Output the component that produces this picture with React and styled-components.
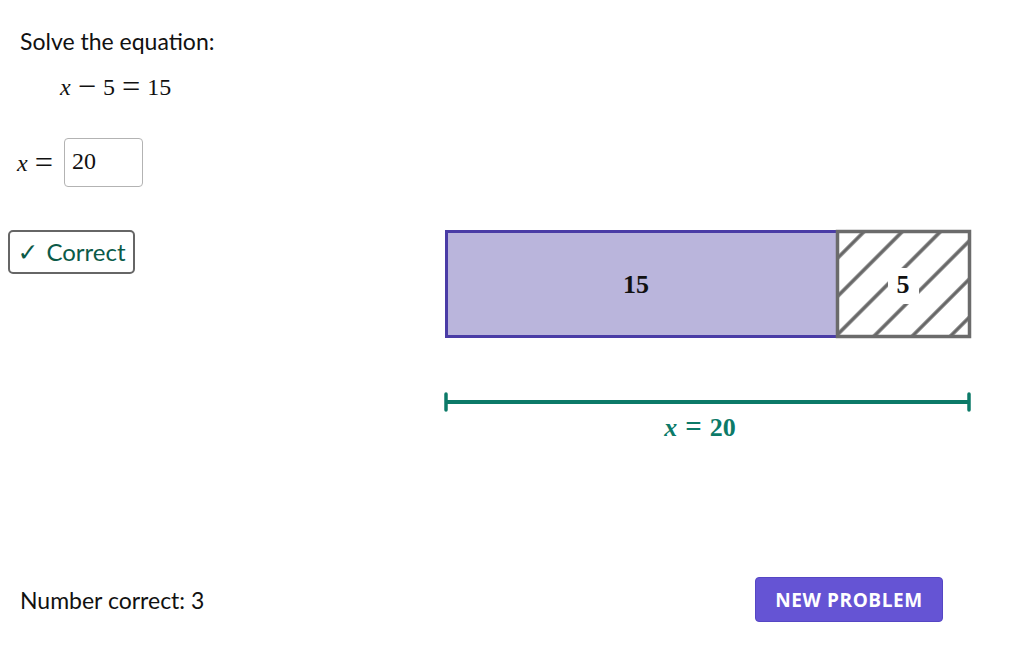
import React from "react";
import styled, { createGlobalStyle } from "styled-components";

const GlobalStyle = createGlobalStyle`
  html, body {
    margin: 0;
    padding: 0;
    background: #ffffff;
  }
  body {
    font-family: Lato, "Noto Sans", sans-serif;
    color: #111;
  }
`;

const Page = styled.div`
  width: 1032px;
  height: 645px;
  box-sizing: border-box;
  display: flex;
  flex-direction: column;
  overflow: hidden;
`;

const Prompt = styled.div`
  margin: 26px 0 0 20px;
  font-size: 23px;
  line-height: 30px;
`;

const MathText = styled.span`
  font-family: "Liberation Serif", "DejaVu Serif", serif;
  font-size: 24px;
  line-height: 30px;
  color: #111;
  white-space: pre;
`;

const Var = styled.i`
  font-style: italic;
`;

const Op = styled.span`
  font-size: 1.35em;
  line-height: 0;
  margin: 0 7px;
  position: relative;
  top: 2px;
`;

const Equation = styled.div`
  margin: 16px 0 0 60px;
  height: 30px;
  line-height: 30px;
`;

const AnswerRow = styled.div`
  margin: 36px 0 0 17px;
  display: flex;
  align-items: center;
  gap: 4px;
`;

const AnswerBox = styled.div`
  width: 79px;
  height: 49px;
  box-sizing: border-box;
  border: 1px solid #b3b3b3;
  border-radius: 4px;
  padding: 0 7px;
  display: flex;
  align-items: center;
  padding-bottom: 4px;
`;

const Middle = styled.div`
  margin-top: 41px;
  padding-left: 8px;
  display: grid;
  grid-template-columns: 434px 1fr;
  align-items: start;
`;

const Feedback = styled.div`
  margin-top: 2px;
  width: 127px;
  height: 44px;
  box-sizing: border-box;
  border: 2px solid #666;
  border-radius: 5px;
  display: flex;
  align-items: center;
  justify-content: center;
  gap: 8px;
  color: #0b5a48;
  font-size: 24px;
  padding-bottom: 2px;
`;

const Check = styled.span`
  font-family: "DejaVu Serif", "DejaVu Sans", serif;
  font-size: 25px;
  line-height: 1;
  margin-top: 2px;
`;

const Footer = styled.div`
  margin-top: auto;
  margin-bottom: 23px;
  padding: 0 89px 0 20px;
  display: flex;
  justify-content: space-between;
  align-items: center;
`;

const Score = styled.div`
  font-size: 23px;
`;

const NewButton = styled.button`
  width: 188px;
  height: 45px;
  border: 1px solid #5546c4;
  border-radius: 4px;
  background: #6554d4;
  color: #fff;
  font-family: "Open Sans", sans-serif;
  font-weight: 700;
  font-size: 19px;
  letter-spacing: 0.6px;
  text-transform: uppercase;
  cursor: pointer;
`;

const Diagram = () => (
  <svg width="532" height="220" viewBox="0 0 532 220">
    <defs>
      <pattern
        id="hatch"
        patternUnits="userSpaceOnUse"
        width="27"
        height="27"
        patternTransform="rotate(45)"
      >
        <line x1="4" y1="0" x2="4" y2="27" stroke="#666" strokeWidth="3.5" />
      </pattern>
    </defs>
    <rect x="4.5" y="3.5" width="391" height="105" fill="#bab5dc" stroke="#4a3ca6" strokeWidth="3" />
    <rect x="395.5" y="3.5" width="132" height="105" fill="#fff" />
    <rect x="395.5" y="3.5" width="132" height="105" fill="url(#hatch)" />
    <rect x="446" y="40" width="31" height="36" fill="#fff" />
    <rect x="395.5" y="3.5" width="132" height="105" fill="none" stroke="#6b6b6b" strokeWidth="3.5" />
    <text x="194" y="65" textAnchor="middle" fontFamily="'Liberation Serif', serif" fontWeight="700" fontSize="26" fill="#111">15</text>
    <text x="461" y="65" textAnchor="middle" fontFamily="'Liberation Serif', serif" fontWeight="700" fontSize="26" fill="#111">5</text>
    <line x1="4" y1="174" x2="527" y2="174" stroke="#0c7a68" strokeWidth="4" />
    <line x1="4" y1="166" x2="4" y2="182" stroke="#0c7a68" strokeWidth="3.5" strokeLinecap="round" />
    <line x1="527" y1="166" x2="527" y2="182" stroke="#0c7a68" strokeWidth="3.5" strokeLinecap="round" />
    <text x="258" y="208" textAnchor="middle" fontFamily="'Liberation Serif', serif" fontWeight="700" fontSize="26" fill="#0c7a68">
      <tspan fontStyle="italic">x</tspan>
      <tspan dx="8" fontSize="29">=</tspan>
      <tspan dx="8">20</tspan>
    </text>
  </svg>
);

export default function App() {
  return (
    <Page>
      <GlobalStyle />
      <Prompt>Solve the equation:</Prompt>
      <Equation>
        <MathText>
          <Var>x</Var>
          <Op>−</Op>5<Op>=</Op>15
        </MathText>
      </Equation>
      <AnswerRow>
        <MathText>
          <Var>x</Var>
          <Op>=</Op>
        </MathText>
        <AnswerBox>
          <MathText>20</MathText>
        </AnswerBox>
      </AnswerRow>
      <Middle>
        <div>
          <Feedback>
            <Check>✓</Check>
            <span>Correct</span>
          </Feedback>
        </div>
        <Diagram />
      </Middle>
      <Footer>
        <Score>Number correct: 3</Score>
        <NewButton>New problem</NewButton>
      </Footer>
    </Page>
  );
}
